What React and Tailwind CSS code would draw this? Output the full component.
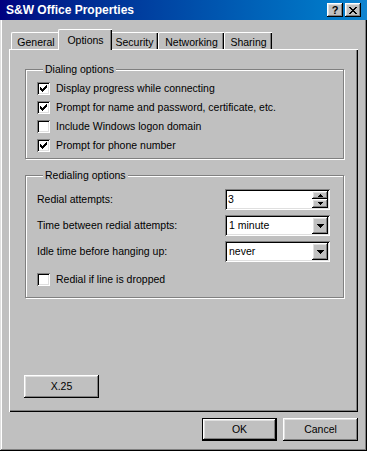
import React from "react";

const raised =
  "bg-[#c0c0c0] shadow-[inset_-1px_-1px_#000,inset_1px_1px_#fff,inset_-2px_-2px_#808080,inset_2px_2px_#dfdfdf]";
const sunken =
  "bg-white shadow-[inset_1px_1px_#808080,inset_-1px_-1px_#fff,inset_2px_2px_#000,inset_-2px_-2px_#dfdfdf]";

function Check() {
  return (
    <svg width="7" height="7" viewBox="0 0 7 7" shapeRendering="crispEdges">
      <path
        fill="#000"
        d="M6 0h1v1h-1z M5 1h2v1h-2z M0 2h1v1h-1z M4 2h3v1h-3z M0 3h2v1h-2z M3 3h3v1h-3z M0 4h5v1h-5z M1 5h3v1h-3z M2 6h1v1h-1z"
      />
    </svg>
  );
}

function Checkbox({ checked, label }) {
  return (
    <div className="flex h-[19px] items-center gap-[6px]">
      <div className={`flex h-[13px] w-[13px] items-center justify-center ${sunken}`}>
        {checked ? <Check /> : null}
      </div>
      <span>{label}</span>
    </div>
  );
}

function DownArrow() {
  return (
    <svg width="7" height="4" viewBox="0 0 7 4" shapeRendering="crispEdges">
      <path fill="#000" d="M0 0h7v1h-7z M1 1h5v1h-5z M2 2h3v1h-3z M3 3h1v1h-1z" />
    </svg>
  );
}

function Combo({ value }) {
  return (
    <div className={`flex h-[21px] w-[105px] items-center p-[2px] ${sunken}`}>
      <span className="flex-1 pl-[2px]">{value}</span>
      <div className={`flex h-[17px] w-[16px] items-center justify-center ${raised}`}>
        <DownArrow />
      </div>
    </div>
  );
}

function Spin({ value }) {
  return (
    <div className={`flex h-[21px] w-[105px] items-center p-[2px] ${sunken}`}>
      <span className="flex-1 pl-[1px]">{value}</span>
      <div className="flex h-[17px] w-[16px] flex-col">
        <div className={`flex h-[8px] items-center justify-center ${raised}`}>
          <svg width="5" height="3" viewBox="0 0 5 3" shapeRendering="crispEdges">
            <path fill="#000" d="M2 0h1v1h-1z M1 1h3v1h-3z M0 2h5v1h-5z" />
          </svg>
        </div>
        <div className={`flex h-[9px] items-center justify-center ${raised}`}>
          <svg width="5" height="3" viewBox="0 0 5 3" shapeRendering="crispEdges">
            <path fill="#000" d="M0 0h5v1h-5z M1 1h3v1h-3z M2 2h1v1h-1z" />
          </svg>
        </div>
      </div>
    </div>
  );
}

function Button({ children, isDefault }) {
  return (
    <div
      className={`flex h-[23px] w-[75px] items-center justify-center ${
        isDefault
          ? "bg-[#c0c0c0] shadow-[inset_0_0_0_1px_#000,inset_-2px_-2px_#000,inset_2px_2px_#fff,inset_-3px_-3px_#808080,inset_3px_3px_#dfdfdf]"
          : raised
      }`}
    >
      {children}
    </div>
  );
}

const tabs = [
  { label: "General", width: "w-[49px]" },
  { label: "Options", width: "w-[54px]", active: true },
  { label: "Security", width: "w-[48px]" },
  { label: "Networking", width: "w-[66px]" },
  { label: "Sharing", width: "w-[48px]" },
];

export default function App() {
  return (
    <div className="flex h-[451px] w-[367px] flex-col bg-[#c0c0c0] font-['Liberation_Sans',Arial,sans-serif] text-[10.5px] text-black shadow-[inset_-1px_-1px_#000,inset_1px_1px_#dfdfdf,inset_-2px_-2px_#808080,inset_2px_2px_#fff]">
      <div className="flex h-[20px] items-center justify-between bg-gradient-to-r from-[#000080] to-[#1084d0] pl-[6px] pr-[6px]">
        <span className="text-[12px] font-bold text-white">S&amp;W Office Properties</span>
        <div className="flex gap-[2px]">
          <div className={`flex h-[14px] w-[16px] items-center justify-center text-[11px] font-bold leading-none ${raised}`}>
            ?
          </div>
          <div className={`flex h-[14px] w-[16px] items-center justify-center ${raised}`}>
            <svg width="8" height="7" viewBox="0 0 8 7" shapeRendering="crispEdges">
              <path
                fill="#000"
                d="M0 0h2v1h-2z M6 0h2v1h-2z M1 1h2v1h-2z M5 1h2v1h-2z M2 2h4v1h-4z M3 3h2v1h-2z M2 4h4v1h-4z M1 5h2v1h-2z M5 5h2v1h-2z M0 6h2v1h-2z M6 6h2v1h-2z"
              />
            </svg>
          </div>
        </div>
      </div>

      <div className="mt-[9px] flex h-[20px] items-end pl-[11px]">
        {tabs.map((tab) =>
          tab.active ? (
            <div
              key={tab.label}
              className={`relative z-10 -mx-[2px] mb-[-1px] flex h-[21px] items-start justify-center rounded-tl-[2px] border-l border-t border-white bg-[#c0c0c0] pt-[3px] shadow-[inset_-1px_0_#000,inset_-2px_0_#808080] ${tab.width}`}
            >
              {tab.label}
            </div>
          ) : (
            <div
              key={tab.label}
              className={`flex h-[17px] items-start justify-center rounded-tl-[2px] border-l border-t border-white pt-[2px] shadow-[inset_-1px_0_#000,inset_-2px_0_#808080] ${tab.width}`}
            >
              {tab.label}
            </div>
          )
        )}
      </div>

      <div className="mx-[9px] flex h-[363px] flex-col border-l border-t border-white shadow-[inset_-1px_-1px_#000,inset_-2px_-2px_#808080]">
        <fieldset className="ml-[15px] mt-[13px] w-[319px] border border-[#808080] pb-[3px] pl-[11px] pt-[4px] shadow-[1px_1px_0_#fff,inset_1px_1px_0_#fff]">
          <legend className="ml-[6px] bg-[#c0c0c0] px-[2px] leading-[12px]">Dialing options</legend>
          <Checkbox checked label="Display progress while connecting" />
          <Checkbox checked label="Prompt for name and password, certificate, etc." />
          <Checkbox label="Include Windows logon domain" />
          <Checkbox checked label="Prompt for phone number" />
        </fieldset>

        <fieldset className="ml-[15px] mt-[10px] w-[319px] border border-[#808080] pb-[8px] pl-[11px] pr-[13px] pt-[8px] shadow-[1px_1px_0_#fff,inset_1px_1px_0_#fff]">
          <legend className="ml-[6px] bg-[#c0c0c0] px-[2px] leading-[12px]">Redialing options</legend>
          <div className="flex flex-col gap-[5px]">
            <div className="flex items-center justify-between">
              <span>Redial attempts:</span>
              <Spin value="3" />
            </div>
            <div className="flex items-center justify-between">
              <span>Time between redial attempts:</span>
              <Combo value="1 minute" />
            </div>
            <div className="flex items-center justify-between">
              <span>Idle time before hanging up:</span>
              <Combo value="never" />
            </div>
          </div>
          <div className="mt-[8px]">
            <Checkbox label="Redial if line is dropped" />
          </div>
        </fieldset>

        <div className="mb-[14px] ml-[14px] mt-auto">
          <Button>X.25</Button>
        </div>
      </div>

      <div className="mr-[9px] mt-[6px] flex justify-end gap-[6px]">
        <Button isDefault>OK</Button>
        <Button>Cancel</Button>
      </div>
    </div>
  );
}
